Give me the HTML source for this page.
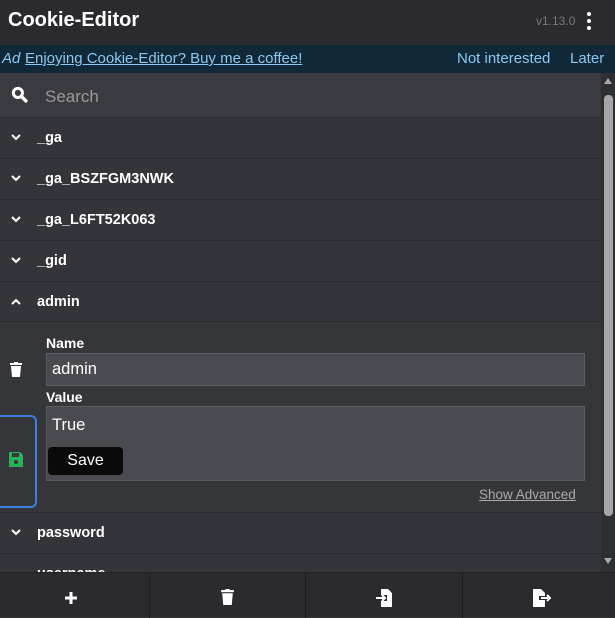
<!DOCTYPE html><html><head><style>
*{box-sizing:border-box;margin:0;padding:0}
body{width:615px;height:617px;overflow:hidden;background:#35363a;font-family:"Liberation Sans",sans-serif;color:#fff;position:relative}
.hdr{height:45px;background:#2b2b2f;position:relative}
.hdr h1{position:absolute;left:8px;top:9px;font-size:20px;font-weight:bold}
.ver{position:absolute;left:536px;top:14px;font-size:12px;color:#777}
.dots{position:absolute;left:587px;top:12px;width:4px}
.dots i{display:block;width:4px;height:4px;border-radius:2px;background:#fff;margin-bottom:3px}
.ad{height:28px;background:#112839;font-size:15px;color:#8cc8f0;position:relative;line-height:28px}
.ad span{position:absolute}
.search{position:absolute;top:73px;left:0;width:601px;height:45px;background:#3a3b40;border-bottom:1px solid #2c2d31}
.search .t{position:absolute;left:45px;top:14px;font-size:17px;color:#9a9a9a}
.row{position:absolute;left:0;width:601px;height:41px;border-bottom:1px solid #2a2b2f;background:#34353a}
.row b{position:absolute;left:37px;top:12px;font-size:14.5px}
.row svg{position:absolute;left:11px;top:16px}
.exp{position:absolute;top:322px;left:0;width:601px;height:191px;background:#35363a;border-bottom:1px solid #2a2b2f}
.lbl{position:absolute;left:46px;font-size:14px;font-weight:bold}
.inp{position:absolute;left:46px;width:539px;background:#4a4b50;border:1px solid #5c5d62;font-size:16.5px;padding-left:5px}
.foot{position:absolute;top:572px;left:0;width:615px;height:45px;background:#2b2b2f;border-top:1px solid #222}
.foot div{position:absolute;top:0;height:45px;border-right:1px solid #1e1e21}
.sb{position:absolute;left:601px;top:73px;width:14px;height:499px;background:#2e2f33}
</style></head><body>
<div class="hdr"><h1>Cookie-Editor</h1><span class="ver">v1.13.0</span><div class="dots"><i></i><i></i><i></i></div></div>
<div class="ad"><span style="left:2px;font-style:italic">Ad</span><span style="left:25px;text-decoration:underline">Enjoying Cookie-Editor? Buy me a coffee!</span><span style="left:457px">Not interested</span><span style="left:570px">Later</span></div>
<div class="search"><svg style="position:absolute;left:11px;top:13px" width="17" height="17" viewBox="0 0 16 16"><circle cx="6.5" cy="6.5" r="4.3" stroke="#fff" stroke-width="2.8" fill="none"/><path d="M10 10l4 4" stroke="#fff" stroke-width="3.2" stroke-linecap="round"/></svg><span class="t">Search</span></div>
<div class="row" style="top:118px"><svg width="10" height="8"><path d="M1 1l4 4 4-4" stroke="#fff" stroke-width="2" fill="none"/></svg><b>_ga</b></div>
<div class="row" style="top:159px"><svg width="10" height="8"><path d="M1 1l4 4 4-4" stroke="#fff" stroke-width="2" fill="none"/></svg><b>_ga_BSZFGM3NWK</b></div>
<div class="row" style="top:200px"><svg width="10" height="8"><path d="M1 1l4 4 4-4" stroke="#fff" stroke-width="2" fill="none"/></svg><b>_ga_L6FT52K063</b></div>
<div class="row" style="top:241px"><svg width="10" height="8"><path d="M1 1l4 4 4-4" stroke="#fff" stroke-width="2" fill="none"/></svg><b>_gid</b></div>
<div class="row" style="top:282px;height:40px"><svg width="10" height="8"><path d="M1 6l4-4 4 4" stroke="#fff" stroke-width="2" fill="none"/></svg><b>admin</b></div>
<div class="exp">
<svg style="position:absolute;left:9px;top:40px" width="14" height="16" viewBox="0 0 14 16"><rect x="1" y="1" width="12" height="2" fill="#fff"/><rect x="5" y="0" width="4" height="2" fill="#fff"/><path d="M2 4h10l-1 11H3z" fill="#fff"/></svg>
<div style="position:absolute;left:0;top:93px;width:37px;height:93px;border:2px solid #3d7fe0;border-left:none;border-radius:0 6px 6px 0"></div>
<svg style="position:absolute;left:9px;top:130px" width="14" height="15" viewBox="0 0 14 15"><path d="M0 0h11l3 3v12H0z" fill="#2bb15a"/><rect x="3" y="1" width="7" height="4" fill="#35363a"/><circle cx="7" cy="10" r="2" fill="#35363a"/></svg>
<span class="lbl" style="top:13px">Name</span>
<div class="inp" style="top:31px;height:33px;line-height:31px">admin</div>
<span class="lbl" style="top:67px">Value</span>
<div class="inp" style="top:84px;height:75px;padding-top:9px">True</div>
<div style="position:absolute;left:48px;top:125px;width:75px;height:28px;background:#0a0a0a;border-radius:4px;font-size:16px;text-align:center;line-height:28px">Save</div>
<span style="position:absolute;left:479px;top:165px;font-size:13.5px;color:#aaa;text-decoration:underline">Show Advanced</span>
</div>
<div class="row" style="top:513px"><svg width="10" height="8"><path d="M1 1l4 4 4-4" stroke="#fff" stroke-width="2" fill="none"/></svg><b>password</b></div>
<div class="row" style="top:554px"><b>username</b></div>
<div class="sb"><div style="position:absolute;left:3px;top:5px;border:4px solid transparent;border-bottom:6px solid #aaa;border-top:none"></div><div style="position:absolute;left:3px;top:22px;width:9px;height:421px;background:#a5a5a5;border-radius:4px"></div><div style="position:absolute;left:3px;top:485px;border:4px solid transparent;border-top:6px solid #aaa;border-bottom:none"></div></div>
<div class="foot"><div style="left:0;width:150px"></div><div style="left:150px;width:156px"></div><div style="left:306px;width:157px"></div>
<svg style="position:absolute;left:64px;top:18px" width="14" height="14"><path d="M7 1v12M1 7h12" stroke="#fff" stroke-width="3"/></svg>
<svg style="position:absolute;left:220px;top:16px" width="15" height="17" viewBox="0 0 14 16"><rect x="1" y="1" width="12" height="2" fill="#fff"/><rect x="5" y="0" width="4" height="2" fill="#fff"/><path d="M2 4h10l-1 11H3z" fill="#fff"/></svg>
<svg style="position:absolute;left:376px;top:16px" width="18" height="18" viewBox="0 0 18 18"><path d="M5 0h7l4 4v14H5v-6h6V6H5z" fill="#fff"/><path d="M0 9h8M6 6l3 3-3 3" stroke="#fff" stroke-width="2" fill="none"/></svg>
<svg style="position:absolute;left:533px;top:16px" width="18" height="18" viewBox="0 0 18 18"><path d="M0 0h8l4 4v3H6v4h6v7H0z" fill="#fff"/><path d="M8 9h9M14 6l3 3-3 3" stroke="#fff" stroke-width="2" fill="none"/></svg>
</div>
</body></html>
